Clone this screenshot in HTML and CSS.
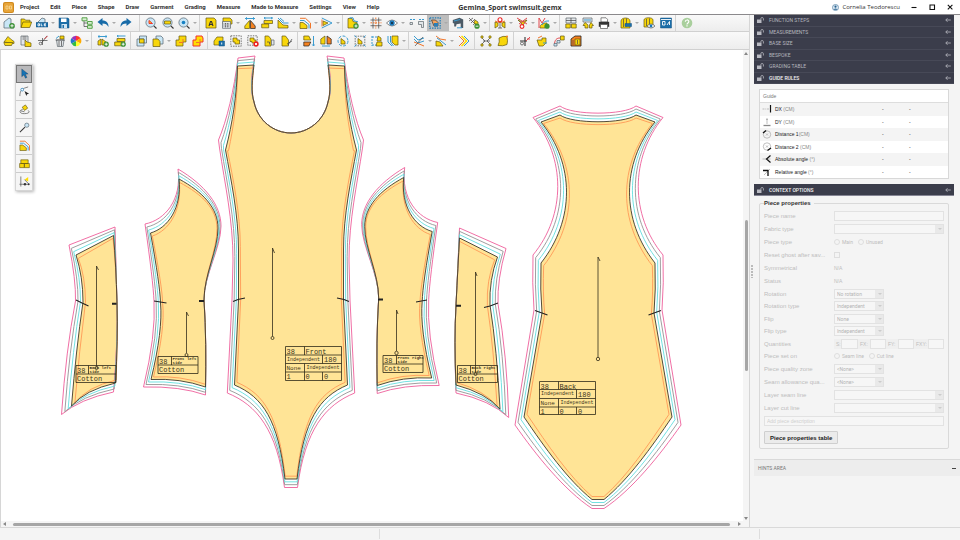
FILE: index.html
```html
<!DOCTYPE html>
<html lang="en">
<head>
<meta charset="utf-8">
<title>Gemina_Sport swimsuit.gemx</title>
<link rel="stylesheet" href="styles.css">
</head>
<body>
<svg class="sprite" aria-hidden="true">
  <symbol id="new" viewBox="0 0 12 12"><path class="b" d="M1 5l5-4 2 1v5l3 2v2H1z"/><circle class="g" cx="9" cy="8.8" r="2.8"/><path class="wl" d="M7.4 8.8h3.2M9 7.2v3.2"/></symbol>
  <symbol id="open" viewBox="0 0 12 12"><path class="y" d="M1 10.5V2h3.5l1 1.2H10v2M1 10.500 3 5h8.700l-2 5.500z"/></symbol>
  <symbol id="ole" viewBox="0 0 12 12"><path class="b" d="M2 5l4-4 3 1v4H2z"/><path class="bd" d="M0 5.500h12v4.500h-12z"/><path class="wl" d="M2 6.800h1.500v2H2zM5.200 6.500v2.300h1.300M10 6.800H8.300v2H10M8.300 7.800h1.500"/></symbol>
  <symbol id="save" viewBox="0 0 12 12"><path class="bd" d="M1 1h9l1 1v9H1z"/><path fill="#fff" d="M3 1.500h5.500V5H3z"/><path fill="#cfe4f2" d="M3.500 7h5.500v4H3.500z"/><path fill="#1b6ea8" d="M4.500 8h1.500v3H4.500z"/></symbol>
  <symbol id="tree" viewBox="0 0 12 12"><path class="k" d="M3 4v5.500h4M3 6h4"/><path class="gr" d="M1 .8h5v3H1zM6.500 4.500h4.700v2.800H6.500z"/><path class="gr" d="M6.500 8.600h4.700v2.700H6.500z"/></symbol>
  <symbol id="undo" viewBox="0 0 12 12"><path fill="#176ba8" d="M.5 5 5.500 1v2.500c4 0 6 2.500 6 6.500-1.300-2.500-3-3.500-6-3.500V9z"/></symbol>
  <symbol id="redo" viewBox="0 0 12 12"><path fill="#176ba8" d="M11.500 5 6.500 1v2.500c-4 0-6 2.500-6 6.500 1.300-2.500 3-3.500 6-3.500V9z"/></symbol>
  <symbol id="zoom1" viewBox="0 0 12 12"><circle class="b" cx="5.500" cy="5.500" r="4.600"/><path class="k2" d="M8.800 8.800 11.500 11.500"/><path fill="#fd0" stroke="#e33" d="M4 3.500l3.500 3H4z"/></symbol>
  <symbol id="zoom2" viewBox="0 0 12 12"><circle class="b" cx="5.500" cy="5.500" r="4.600"/><path class="k2" d="M8.800 8.800 11.500 11.500"/><path class="y" d="M2.500 4h6v3h-6z"/></symbol>
  <symbol id="zoom3" viewBox="0 0 12 12"><circle class="b" cx="5.500" cy="5.500" r="4.600"/><path class="k2" d="M8.800 8.800 11.500 11.500"/><circle cx="5.500" cy="5.500" r="1.800" fill="#1580c4"/></symbol>
  <symbol id="label-a" viewBox="0 0 12 12"><path class="y" d="M1 1h8l2 2v8H1z"/><path class="k2" d="M4 9l1.500-4.500h1L8 9M4.500 7.500h3"/></symbol>
  <symbol id="calc" viewBox="0 0 12 12"><path class="y" d="M2 1h7l2 2v4H2z"/><path class="gr2" d="M1.500 4.500h8v6.800h-8z"/><path class="k" d="M2.500 7h6M2.500 9h6M4.500 6v5M6.700 6v5" stroke-dasharray="1 .6"/></symbol>
  <symbol id="mirror" viewBox="0 0 12 12"><path class="bl" d="M1 1.500h10M3 .3 1.500 1.500 3 2.700M9 .3l1.500 1.200L9 2.700"/><path class="y" d="M5.500 3.500v8H.8V9z"/><path fill="#f58220" stroke="#222" stroke-width=".7" d="M6.500 3.500v8h4.700V9z"/></symbol>
  <symbol id="stretch" viewBox="0 0 12 12"><path class="bl" d="M3 1h8.500M4.500 0 3 1l1.500 1M10 0l1.500 1L10 2"/><path class="y" d="M3 3.500h8.500v3H3zM.7 7h7v3.800h-7z"/></symbol>
  <symbol id="corner" viewBox="0 0 12 12"><path class="y" d="M1 3v8h10V8.500L6 8z"/><path class="bl" d="M1 1l5 5h5.500M3 1l4 3.500"/></symbol>
  <symbol id="nest" viewBox="0 0 12 12"><path class="y" d="M1 5.500h3l4 3v3H1z"/><path class="bl" d="M1 3.500h4l5 4v4"/><path class="ol" d="M1 1.300h5.500l5 4.700v5.500"/></symbol>
  <symbol id="tri" viewBox="0 0 12 12"><path class="bl" d="M.8 1 11 6 .8 11"/><path class="y" d="M2 4l5 2-5 2.500z"/><path class="ol" d="M1 2.500v7"/></symbol>
  <symbol id="add-piece" viewBox="0 0 12 12"><path class="y" d="M1 1.500h4l1 3 4 1v5.500H1z"/><path class="bl" d="M2.500 .8h3.500l1 3 4 1"/><circle class="g" cx="9" cy="9" r="2.700"/><path class="wl" d="M7.500 9h3M9 7.500v3"/></symbol>
  <symbol id="grid" viewBox="0 0 12 12"><path class="k" d="M3 .5v11M8.700 .5v11M.5 3h11M.5 8.700h11"/><path class="ol" d="M5.800 .5v11M.5 5.800h11" stroke-dasharray="1.500 1"/></symbol>
  <symbol id="eye" viewBox="0 0 12 12"><path class="w" d="M.5 6Q6 0 11.500 6 6 12 .5 6z"/><circle cx="6" cy="6" r="2.700" fill="#1b78b8"/><circle cx="6" cy="6" r="1" fill="#123"/></symbol>
  <symbol id="pair" viewBox="0 0 16 12"><path class="bl" d="M1 2.500h5M10 2.500h5" stroke-dasharray="2 1"/><path class="gr2" d="M1 5.500h2.500v2H1zM9.500 4.500h5v6h-2V7.500h-3z"/></symbol>
  <symbol id="ghost" viewBox="0 0 12 12"><path d="M.8 .8h10.400v10.400H.8z" fill="none" stroke="#247db5" stroke-width="1.200" stroke-dasharray="1.500 1"/><path fill="#f7a35c" stroke="#333" stroke-width=".7" d="M2.500 3h4l2.500 2.500V9H5z"/><path fill="#2b7fb9" d="M5 6h4v3.500H5z"/></symbol>
  <symbol id="machine" viewBox="0 0 12 12"><path fill="#4b5a66" d="M.8 3 7.500 .8l3.700 1.700v8.500H8.700V6.500l-4.200.8L4 9.500H2.200V6.500L.8 6z"/><path class="bl" d="M2 4l6-1.500M5 10.800h5"/></symbol>
  <symbol id="needle" viewBox="0 0 12 12"><path class="k" d="M1 1l8 8M1 4l4-3M3 6l4-4M5 8l3.500-3"/><path class="y" d="M7 3l3 2v3l-4-2z"/><circle class="g" cx="9" cy="9.200" r="2.600"/><path class="wl" d="M7.600 9.200h2.800"/></symbol>
  <symbol id="pin-r" viewBox="0 0 12 12"><path class="y" d="M1 5l3 1v3l-3 2zM11 5 8 6v3l3 2z"/><circle cx="6" cy="2.700" r="2" class="rr"/><path class="ol" d="M1 4l4 1.500h2L11 4"/><path class="k" d="M6 5v6M4 11h4"/></symbol>
  <symbol id="cross-r" viewBox="0 0 12 12"><path class="y" d="M2 3l4 2 5-2-4 5z"/><path class="rl" d="M1 1l10 6M11 1 3 7"/><circle cx="6" cy="9.500" r="1.900" class="rr"/></symbol>
  <symbol id="fan" viewBox="0 0 12 12"><path class="y" d="M2 11c0-4 3-5 7-5l-2 5z"/><path class="rl" d="M1 11V1l3 5 3-5"/><path class="bl" d="M4 8c2-4 4-4 7-4"/><circle class="g" cx="9" cy="9.200" r="2.600"/></symbol>
  <symbol id="layout" viewBox="0 0 12 12"><path class="gr2" d="M1 1h10v5H1z"/><path class="k" d="M1 3.500h10M6 1v5"/><path class="y" d="M.8 7h4.500v4H.8zM6.500 7h4.700v4H6.500z"/></symbol>
  <symbol id="layout2" viewBox="0 0 12 12"><path class="gr2" d="M1 1h9v4H1z"/><path class="bl" d="M2 3h7"/><path class="y" d="M3 5.500 6 8v3H3V8.500H1zM9 5.500l2.500 3H10V11H7.500V8z"/></symbol>
  <symbol id="print" viewBox="0 0 12 12"><path class="w" d="M3 .8h5l1.500 1.500V5H3z"/><path fill="#333" d="M.8 4.800h10.400v5H.8z"/><path class="w" d="M2.500 7.500h7v4h-7z"/></symbol>
  <symbol id="roll" viewBox="0 0 12 12"><path class="y" d="M1 4c0-4 9-4 9 0v7H1z"/><path class="k" d="M3.500 2v8M6.500 1.500v8"/><path class="bd" d="M5 6.500h6.500v3H5z"/></symbol>
  <symbol id="roll-eye" viewBox="0 0 12 12"><path class="y" d="M1 3c0-3 9-3 9 0v7H1z"/><path class="k" d="M3.500 2v7M6.500 1.500v7"/><path class="w" d="M4 9q4-4 8 0-4 4-8 0z"/><circle cx="8" cy="9" r="1.400" fill="#1b78b8"/></symbol>
  <symbol id="screen" viewBox="0 0 12 12"><path class="bd" d="M.5 1h11v10H.5z"/><path class="wl" d="M2.500 4.500h2.500v3.500H2.500zM7 8l2.500-3.500V8M1 2.500h10"/></symbol>
  <symbol id="help" viewBox="0 0 12 12"><circle cx="6" cy="6" r="5.300" fill="#a9cf9d"/><path d="M4.300 4.800c0-2.400 3.500-2.400 3.500-.2 0 1.400-1.800 1.300-1.800 2.900M6 8.300v1.300" fill="none" stroke="#fff" stroke-width="1.200"/></symbol>

  <symbol id="p-rot" viewBox="0 0 12 12"><path class="y" d="M1 7l4-5.500 2.500 2.500 3.500 2.500v2z"/><path class="y" d="M.8 7.500h9L8.500 10.500H2z"/></symbol>
  <symbol id="paste" viewBox="0 0 12 12"><path class="gr2" d="M1 1h7v9H1z"/><path class="k" d="M2.500 2h4M2.500 4h4"/><path class="y" d="M5 5l2 2 4 1v3.500H5z"/></symbol>
  <symbol id="cut" viewBox="0 0 12 12"><path class="k" d="M10 .8 4.500 8M1 5.500h9.500M5.500 3v7"/><circle class="k" cx="3.500" cy="8.500" r="1.300"/><path class="rl" d="M7.500 4l3-3"/></symbol>
  <symbol id="trash" viewBox="0 0 12 12"><path class="y" d="M6 1h4v3H6z"/><path class="gr2" d="M2.500 5h7.500l-1 6.500H3.500z"/><path class="k" d="M1.500 5h9.500M5 6v5M7.500 6v5"/><path class="bl" d="M2 3.500l3-2.500"/></symbol>
  <symbol id="wheel" viewBox="0 0 12 12"><path fill="#f33" d="M6 6V.7a5.300 5.300 0 0 1 4.600 2.600z"/><path fill="#fa0" d="M6 6l4.600-2.700a5.300 5.300 0 0 1 0 5.300z"/><path fill="#ff3" d="M6 6l4.600 2.600A5.300 5.300 0 0 1 6 11.300z"/><path fill="#3b4" d="M6 6v5.300a5.300 5.300 0 0 1-4.600-2.700z"/><path fill="#27c" d="M6 6 1.400 8.600a5.300 5.300 0 0 1 0-5.300z"/><path fill="#93b" d="M6 6 1.400 3.300A5.300 5.300 0 0 1 6 .7z"/></symbol>
  <symbol id="w-add" viewBox="0 0 12 12"><path class="bl" d="M1 1.500h9M2.500 .3 1 1.500l1.500 1.200M8.500 .3 10 1.500 8.500 2.700"/><path class="y" d="M1 10V6l3-2v6zM5 10V4l4 3v3z"/><circle class="g" cx="9.200" cy="9.200" r="2.600"/><path class="wl" d="M7.700 9.200h3M9.200 7.700v3"/></symbol>
  <symbol id="s-add" viewBox="0 0 12 12"><path class="bl" d="M3 1h8.500M4.500 0 3 1l1.500 1"/><path class="y" d="M3 3.500h8v3H3zM.7 7h7v3.800h-7z"/><circle class="g" cx="9.200" cy="9.200" r="2.600"/><path class="wl" d="M7.700 9.200h3M9.200 7.700v3"/></symbol>
  <symbol id="copy1" viewBox="0 0 12 12"><path class="b" d="M3.500 1h7v7h-7z"/><path class="b" d="M1 4h7v7H1z"/><path class="y" d="M3.500 4H8v4H3.500z"/></symbol>
  <symbol id="copy2" viewBox="0 0 12 12"><path class="b" d="M4 1h5l2 2v6H4z"/><path class="y" d="M1 4h5l2 2.500v5H1z"/></symbol>
  <symbol id="merge" viewBox="0 0 12 12"><path class="y" d="M4 1h7v6H8v4H1V5h3z"/><path class="ol" d="M4 7.500h4V4"/></symbol>
  <symbol id="merge-r" viewBox="0 0 12 12"><path fill="#fd0" stroke="#e33" d="M4 1h6l1 2v4H8v4H1V5h3z"/><path class="ol" d="M4 7.500h4V4"/></symbol>
  <symbol id="lock" viewBox="0 0 12 12"><path class="y" d="M1 6l3-4h6v3L8 10H1z"/><path class="bd" d="M6 6h5.500v5H6z"/><path class="wl" d="M8.700 7.500v2"/></symbol>
  <symbol id="sel" viewBox="0 0 12 12"><path d="M.8 .8h10.400v10.400H.8z" class="dash"/><path class="y" d="M3 3h4v2h2.500v4H5V7H3z"/></symbol>
  <symbol id="sel-x" viewBox="0 0 12 12"><path d="M.8 .8h9.400v9.400H.8z" class="dash"/><path class="y" d="M3 3h4v2h2v3H5V6.500H3z"/><circle cx="9" cy="9" r="2.700" fill="#e22"/><path class="wl" d="M8 8l2 2M10 8l-2 2"/></symbol>
  <symbol id="turn1" viewBox="0 0 12 12"><path class="y" d="M1 1h3.500L7 4v7H1z"/><path class="gr2" d="M7.500 5H10v5H7.500z"/><path class="k" d="M3 7h2.500v2.500"/></symbol>
  <symbol id="turn2" viewBox="0 0 12 12"><path class="y" d="M1 1h3.500L7.500 5v6H1z"/><path class="k" d="M11 4l-4 6M6 9l5-3"/></symbol>
  <symbol id="updown" viewBox="0 0 12 12"><path class="y" d="M.8 1h5l2 4h-7z"/><path fill="#f58220" stroke="#222" stroke-width=".7" d="M.8 7h7l-2 4h-5z"/><path class="bl" d="M10.500 1v10M9.300 9.500l1.200 1.500 1.200-1.500"/></symbol>
  <symbol id="flip-h" viewBox="0 0 12 12"><path class="y" d="M5 1v8H.8V4z"/><path fill="#f58220" stroke="#222" stroke-width=".7" d="M7 1v8h4.200V4z"/><path class="bl" d="M2 11h8"/></symbol>
  <symbol id="rot" viewBox="0 0 12 12"><circle cx="6" cy="6" r="5" class="bl" stroke-dasharray="3 1.500"/><path class="y" d="M4 3.500l4 3V9H4z"/></symbol>
  <symbol id="scale" viewBox="0 0 12 12"><path d="M1.200 1.200h9.600v9.600H1.200z" class="dash"/><path class="y" d="M4 3.500l4 3V9H4z"/><path class="bl" d="M.5 .5l2 2M11.500 .5l-2 2M.5 11.500l2-2M11.500 11.500l-2-2"/></symbol>
  <symbol id="align" viewBox="0 0 12 12"><path class="bl" d="M1 1v10M1 2h5M1 10h5" stroke-dasharray="2 1"/><path class="y" d="M7 1l3 2v3H6zM6 7h5v4H5z"/></symbol>
  <symbol id="unfold" viewBox="0 0 12 12"><path class="y" d="M5 1h6v9H8L5 7z"/><path class="bl" d="M3.500 1v6l3 4M1 1v6l4 4"/></symbol>
  <symbol id="g1" viewBox="0 0 12 12"><path class="bl" d="M1 1l4 4 6-2M1 4l4 4 6-2"/><path class="ol" d="M1 7l4 1.500L11 11"/><path class="k" d="M2 11l8-9"/></symbol>
  <symbol id="g2" viewBox="0 0 12 12"><path class="y" d="M1 6l4 1 3 4H1z"/><path class="ol" d="M1 1l4 3 6 1"/><path class="bl" d="M2 3l4 3 5 4"/></symbol>
  <symbol id="g3" viewBox="0 0 12 12"><path class="ol" d="M1 1l5 5-5 5"/><path d="M3.500 1l5 5-5 5" fill="none" stroke="#fd0" stroke-width="1.500"/><path class="bl" d="M6 1l5 5-5 5"/></symbol>
  <symbol id="spread" viewBox="0 0 12 12"><path class="k" d="M1 2l4 4-4 4M11 2 7 6l4 4M3 6h7"/><circle class="y" cx="2" cy="2" r="1.200"/><circle class="y" cx="10" cy="2" r="1.200"/><circle class="y" cx="2" cy="10" r="1.200"/><circle class="y" cx="10" cy="10" r="1.200"/></symbol>
  <symbol id="bulge" viewBox="0 0 12 12"><path class="y" d="M2 3q4-2.500 8-1.500Q11 6 10 9.500q-4 2-9 1Q3 7 2 3z"/><circle cx="10" cy="1.500" r="1" fill="#f58220"/></symbol>
  <symbol id="snip" viewBox="0 0 12 12"><path class="k2" d="M1 6h7M6 2v9"/><path class="rl" d="M7 6l4-4M8 4h3"/><circle class="k" cx="3" cy="8.500" r="1.500"/></symbol>
  <symbol id="swap" viewBox="0 0 12 12"><path class="y" d="M1 5h5V3h4v5L7 11H3z"/><path class="ol" d="M2 3l4-2"/><path class="bl" d="M7 8h4"/></symbol>
  <symbol id="link" viewBox="0 0 12 12"><path class="rl" d="M1.500 10c0-5 2-7 5.500-7"/><path class="y" d="M7.500 1h3.700v4H7.500z"/><path class="b" d="M4 5.500h3v2.500H4zM1 8.500h3v2.500H1z"/></symbol>
  <symbol id="book" viewBox="0 0 12 12"><path fill="#f58220" stroke="#222" stroke-width=".8" d="M1 4l4-3h6v10H1z"/><path class="y" d="M5 4h5v6H5z"/><path class="k" d="M3 5v5M7.500 5v4"/></symbol>

  <symbol id="arrow" viewBox="0 0 12 12"><path fill="#1673b5" stroke="#123" stroke-width=".3" d="M3 1l7 5.500-3 .3 1.700 3.500-1.700.8-1.600-3.600L3 9.500z"/></symbol>
  <symbol id="node" viewBox="0 0 12 12"><path class="k" d="M1 11V9q0-6 9-8"/><circle cx="3.500" cy="4" r="1.500" fill="#fff" stroke="#1b78b8" stroke-width=".8"/><path fill="#222" d="M6 5.500l5 3-2.300.5-.7 2z"/></symbol>
  <symbol id="sew" viewBox="0 0 12 12"><path class="y" d="M3.500 3.500 7 1l2.500 3.500L6 7z"/><path class="k" d="M4 6c-5 1-3 5 2 4.500 5 0 6-2 4-3.500M2 7.500l4 1"/></symbol>
  <symbol id="probe" viewBox="0 0 12 12"><path class="k2" d="M1 11l5.500-5.500"/><circle class="b" cx="8.500" cy="3.500" r="2.300"/></symbol>
  <symbol id="boxes" viewBox="0 0 12 12"><path class="y" d="M2 2h8v4H2zM.7 6h5v4.500h-5zM6 6h5.300v4.500H6z"/></symbol>
  <symbol id="notch" viewBox="0 0 12 12"><path fill="#fd0" d="M6 4l4-3v5z"/><path class="k" d="M2 .5v11M.5 9h11M6 4l4 4"/><circle cx="6.500" cy="9" r="1.300" fill="#333"/><circle cx="10.500" cy="9" r="1" fill="#333"/></symbol>

  <symbol id="unlock" viewBox="0 0 8 6"><path fill="#b9bac2" d="M0 2.500h4.500V6H0z"/><path d="M3.800 2.500V1.800a1.300 1.300 0 0 1 2.600 0V3.500" fill="none" stroke="#b9bac2" stroke-width=".8"/></symbol>
  <symbol id="back" viewBox="0 0 6 6"><path d="M.8 3h5M2.500 1.200.8 3l1.700 1.800" fill="none" stroke="#b9bac2" stroke-width=".8"/></symbol>
  <symbol id="r-dx" viewBox="0 0 10 10"><path class="q" d="M.5 5h2M3.300 5h1M5 5h2"/><path d="M8.500 1v7.500" stroke="#111" stroke-width="1.200"/></symbol>
  <symbol id="r-dy" viewBox="0 0 10 10"><path class="q" d="M5 1v6M4 2.500h2"/><path d="M1.500 8.500h7" stroke="#888" stroke-width="1.300"/></symbol>
  <symbol id="r-d1" viewBox="0 0 10 10"><circle class="q" cx="5" cy="5.500" r="3.700"/><path class="q" d="M4 4.500l2 2M6 4.500l-2 2"/><path d="M1 4l3-2.500" stroke="#111" stroke-width="1.300"/></symbol>
  <symbol id="r-d2" viewBox="0 0 10 10"><circle class="q" cx="5" cy="4.500" r="3.700"/><path class="q" d="M4 3.500l2 2M6 3.500l-2 2"/><path d="M5.500 8.500 9 6" stroke="#111" stroke-width="1.300"/></symbol>
  <symbol id="r-ab" viewBox="0 0 10 10"><path class="q" d="M.5 5h8"/><path d="M8.500 1.500 4.500 5l4 3.500" fill="none" stroke="#111" stroke-width="1.200"/></symbol>
  <symbol id="r-re" viewBox="0 0 10 10"><path class="q" d="M2 8l6-6"/><path d="M1 3.500h5V9" fill="none" stroke="#111" stroke-width="1.300"/></symbol>
</svg>

<div class="app">
  <header class="titlebar">
    <svg class="logo" viewBox="0 0 11 11" aria-hidden="true"><rect width="11" height="11" rx="2" fill="#d08a1e"/><rect x="1" y="1" width="9" height="9" rx="1.500" fill="#e8a53a"/><path d="M3 4h2v3H3zM6.500 4h2v3h-2z" fill="none" stroke="#f6d894" stroke-width=".8"/></svg>
    <nav class="menu">
      <a href="#">Project</a><a href="#">Edit</a><a href="#">Piece</a><a href="#">Shape</a><a href="#">Draw</a><a href="#">Garment</a><a href="#">Grading</a><a href="#">Measure</a><a href="#">Made to Measure</a><a href="#">Settings</a><a href="#">View</a><a href="#">Help</a>
    </nav>
    <h1>Gemina_Sport swimsuit.gemx</h1>
    <div class="user"><svg viewBox="0 0 8 8" aria-hidden="true"><circle cx="4" cy="4" r="3.500" fill="#dbe9f3" stroke="#45779d" stroke-width=".7"/><circle cx="4" cy="3" r="1.200" fill="#27618f"/><path d="M1.800 6.500q2.200-3 4.400 0z" fill="#27618f"/></svg>Cornelia Teodorescu</div>
    <div class="win">
      <button aria-label="Minimize"><svg viewBox="0 0 8 8"><path d="M1.500 4.500h5"/></svg></button>
      <button aria-label="Maximize"><svg viewBox="0 0 8 8"><path d="M2 2h4.500v4.500H2z"/></svg></button>
      <button aria-label="Close"><svg viewBox="0 0 8 8"><path d="M1.800 1.800l4.600 4.600M6.400 1.800 1.800 6.400"/></svg></button>
    </div>
  </header>

  <div class="work">
    <main class="left">
      <div class="toolbar">
        <div class="group roomy">
          <button aria-label="New"><svg><use href="#new"/></svg></button>
          <button aria-label="Open"><svg><use href="#open"/></svg></button>
          <button class="drop" aria-label="OLE"><svg><use href="#ole"/></svg></button>
          <button class="drop" aria-label="Save"><svg><use href="#save"/></svg></button>
          <button aria-label="Structure"><svg><use href="#tree"/></svg></button>
          <button class="drop" aria-label="Undo"><svg><use href="#undo"/></svg></button>
          <button aria-label="Redo"><svg><use href="#redo"/></svg></button>
        </div>
        <div class="group">
          <button aria-label="Zoom piece"><svg><use href="#zoom1"/></svg></button>
          <button aria-label="Zoom all"><svg><use href="#zoom2"/></svg></button>
          <button class="drop" aria-label="Zoom point"><svg><use href="#zoom3"/></svg></button>
        </div>
        <div class="group">
          <button aria-label="Piece label"><svg><use href="#label-a"/></svg></button>
          <button class="drop" aria-label="Calculator"><svg><use href="#calc"/></svg></button>
          <button aria-label="Compare"><svg><use href="#mirror"/></svg></button>
          <button aria-label="Stretch"><svg><use href="#stretch"/></svg></button>
          <button class="drop" aria-label="Seam corner"><svg><use href="#corner"/></svg></button>
          <button class="drop" aria-label="Nest"><svg><use href="#nest"/></svg></button>
          <button class="drop" aria-label="Dart"><svg><use href="#tri"/></svg></button>
        </div>
        <div class="group">
          <button class="drop" aria-label="Add piece"><svg><use href="#add-piece"/></svg></button>
          <button aria-label="Grid"><svg><use href="#grid"/></svg></button>
          <button class="drop" aria-label="View"><svg><use href="#eye"/></svg></button>
          <button class="pair" aria-label="Pairs"><svg><use href="#pair"/></svg></button>
          <button class="drop pressed" aria-label="Ghost"><svg><use href="#ghost"/></svg></button>
          <button aria-label="Sewing"><svg><use href="#machine"/></svg></button>
          <button class="drop" aria-label="Stitch"><svg><use href="#needle"/></svg></button>
        </div>
        <div class="group">
          <button class="drop" aria-label="Pin"><svg><use href="#pin-r"/></svg></button>
          <button class="drop" aria-label="Intersect"><svg><use href="#cross-r"/></svg></button>
          <button class="drop" aria-label="Fan"><svg><use href="#fan"/></svg></button>
        </div>
        <div class="group">
          <button aria-label="Marker"><svg><use href="#layout"/></svg></button>
          <button aria-label="Marker order"><svg><use href="#layout2"/></svg></button>
          <button class="drop" aria-label="Print"><svg><use href="#print"/></svg></button>
          <button class="drop" aria-label="Plot"><svg><use href="#roll"/></svg></button>
          <button aria-label="Preview plot"><svg><use href="#roll-eye"/></svg></button>
          <button aria-label="Screen"><svg><use href="#screen"/></svg></button>
        </div>
        <div class="group">
          <button aria-label="Help"><svg><use href="#help"/></svg></button>
        </div>
      </div>
      <div class="toolbar">
        <div class="group">
          <button aria-label="Rotate piece"><svg><use href="#p-rot"/></svg></button>
          <button aria-label="Paste"><svg><use href="#paste"/></svg></button>
          <button aria-label="Cut"><svg><use href="#cut"/></svg></button>
          <button aria-label="Delete"><svg><use href="#trash"/></svg></button>
          <button class="drop" aria-label="Colours"><svg><use href="#wheel"/></svg></button>
        </div>
        <div class="group mid">
          <button aria-label="Add width"><svg><use href="#w-add"/></svg></button>
          <button aria-label="Add stretch"><svg><use href="#s-add"/></svg></button>
        </div>
        <div class="group">
          <button aria-label="Duplicate"><svg><use href="#copy1"/></svg></button>
          <button class="drop" aria-label="Duplicate shape"><svg><use href="#copy2"/></svg></button>
          <button aria-label="Merge"><svg><use href="#merge"/></svg></button>
          <button aria-label="Merge red"><svg><use href="#merge-r"/></svg></button>
        </div>
        <div class="group mid">
          <button aria-label="Lock"><svg><use href="#lock"/></svg></button>
          <button aria-label="Select"><svg><use href="#sel"/></svg></button>
          <button aria-label="Deselect"><svg><use href="#sel-x"/></svg></button>
          <button aria-label="Turn"><svg><use href="#turn1"/></svg></button>
          <button aria-label="Turn free"><svg><use href="#turn2"/></svg></button>
        </div>
        <div class="group">
          <button aria-label="Flip vertical"><svg><use href="#updown"/></svg></button>
          <button aria-label="Flip horizontal"><svg><use href="#flip-h"/></svg></button>
          <button aria-label="Rotate"><svg><use href="#rot"/></svg></button>
          <button aria-label="Scale"><svg><use href="#scale"/></svg></button>
          <button aria-label="Align"><svg><use href="#align"/></svg></button>
          <button class="drop" aria-label="Unfold"><svg><use href="#unfold"/></svg></button>
        </div>
        <div class="group mid">
          <button class="drop" aria-label="Grade cross"><svg><use href="#g1"/></svg></button>
          <button class="drop" aria-label="Grade line"><svg><use href="#g2"/></svg></button>
          <button aria-label="Grade copy"><svg><use href="#g3"/></svg></button>
        </div>
        <div class="group mid">
          <button aria-label="Spread"><svg><use href="#spread"/></svg></button>
          <button aria-label="Shape"><svg><use href="#bulge"/></svg></button>
        </div>
        <div class="group">
          <button aria-label="Snip"><svg><use href="#snip"/></svg></button>
          <button aria-label="Swap"><svg><use href="#swap"/></svg></button>
          <button aria-label="Link"><svg><use href="#link"/></svg></button>
          <button aria-label="Library"><svg><use href="#book"/></svg></button>
        </div>
      </div>

      <div class="stage">
        <div class="canvas">
          <svg class="drawing" viewBox="1 50 742 471" role="img" aria-label="Swimsuit pieces">
            <g id="pieces"></g>
            <g class="grain">
              <path d="M272.500 248v88.500M272.500 248l2 5"/><circle cx="272.500" cy="338" r="1.500"/>
              <path d="M598 257v100.500M598 257l2 4"/><circle cx="598" cy="359" r="1.700"/>
              <path d="M96.500 266v100.500M96.500 266l2 4"/><circle cx="96.500" cy="368" r="1.500"/>
              <path d="M186.500 312v41M186.500 312l2 4"/><circle cx="186.500" cy="355" r="1.500"/>
              <path d="M396.500 310v41M396.500 310l1.500 4"/><circle cx="396.500" cy="353" r="1.700"/>
              <path d="M475.500 272v100.500M475.500 272l1.500 4"/><circle cx="475.500" cy="374" r="1.500"/>
            </g>
            <g class="notches">
              <path d="M233 301.500l5-2 7-1.500M349 301.500l-5-2-7-1.500M535 310.500l12.500 4.500M661 310.500 648.500 315M76 300l6 3 6.500 3M154 301l12.500 2M416 302l11-2M484 307.500l6-1.500 8-3"/>
              <path class="blob" d="M112 303.800h4.500M199 301h5M378 299.500h5M456 305.800h5"/>
            </g>
            <g class="plate" transform="translate(76 365.500)"><path d="M0 0h40v17H0zM0 8.500h40M12.500 0v8.500"/><text class="t7" x="1" y="7">38</text><text class="t4" x="13.500" y="3.500">Back left</text><text class="t4" x="13.500" y="7.500">side</text><text class="t7" x="1" y="15">Cotton</text></g>
            <g class="plate" transform="translate(158 356.500)"><path d="M0 0h40v17H0zM0 8.500h40M13.500 0v8.500"/><text class="t7" x="1" y="7">38</text><text class="t4" x="14.500" y="3.500">Front left</text><text class="t4" x="14.500" y="7.500">side</text><text class="t7" x="1" y="15">Cotton</text></g>
            <g class="plate" transform="translate(383 355.500)"><path d="M0 0h40v17H0zM0 8.500h40M13.500 0v8.500"/><text class="t7" x="1" y="7">38</text><text class="t4" x="14.500" y="3.500">Front right</text><text class="t4" x="14.500" y="7.500">side</text><text class="t7" x="1" y="15">Cotton</text></g>
            <g class="plate" transform="translate(457.500 365.500)"><path d="M0 0h40v17H0zM0 8.500h40M13 0v8.500"/><text class="t7" x="1" y="7">38</text><text class="t4" x="14" y="3.500">Back right</text><text class="t4" x="14" y="7.500">side</text><text class="t7" x="1" y="15">Cotton</text></g>
            <g class="plate" transform="translate(285.500 346.500)"><path d="M0 0h56v34H0zM0 8.500h56M0 17h56M0 25.500h56M19 0v8.500M37 8.500v8.500M19 17v17M37 25.500v8.500"/><text class="t7" x="1" y="7">38</text><text class="t7" x="20" y="7">Front</text><text class="t5" x="1.500" y="14">Independent</text><text class="t7" x="38.500" y="15.500">180</text><text class="t6" x="1" y="23.500">None</text><text class="t5" x="21" y="22.500">Independent</text><text class="t7" x="1" y="32.500">1</text><text class="t7" x="20" y="32.500">0</text><text class="t7" x="38.500" y="32.500">0</text></g>
            <g class="plate" transform="translate(539.500 381.500)"><path d="M0 0h56v33H0zM0 8h56M0 17h56M0 25.500h56M19 0v8M37 8v9M19 17v16M37 25.500v7.500"/><text class="t7" x="1" y="7">38</text><text class="t7" x="20" y="7">Back</text><text class="t5" x="1.500" y="13.500">Independent</text><text class="t7" x="38.500" y="15">180</text><text class="t6" x="1" y="23">None</text><text class="t5" x="21" y="22">Independent</text><text class="t7" x="1" y="32">1</text><text class="t7" x="20" y="32">0</text><text class="t7" x="38.500" y="32">0</text></g>
          </svg>
          <div class="palette">
            <button class="on" aria-label="Select"><svg><use href="#arrow"/></svg></button>
            <button aria-label="Edit points"><svg><use href="#node"/></svg></button>
            <button aria-label="Sew"><svg><use href="#sew"/></svg></button>
            <button aria-label="Probe"><svg><use href="#probe"/></svg></button>
            <button aria-label="Nest"><svg><use href="#nest"/></svg></button>
            <button aria-label="Group"><svg><use href="#boxes"/></svg></button>
            <button aria-label="Notch"><svg><use href="#notch"/></svg></button>
          </div>
        </div>
        <div class="vbar"><i class="up"></i><span class="vtrack"><b></b></span><i class="down"></i></div>
        <div class="hbar"><i class="prev"></i><b></b><i class="next"></i></div>
      </div>
    </main>

    <aside class="side">
      <div class="grip"></div>
      <div class="panels">
        <div class="accordion">
          <button><svg class="lk"><use href="#unlock"/></svg><span>FUNCTION STEPS</span><svg class="ar"><use href="#back"/></svg></button>
          <button><svg class="lk"><use href="#unlock"/></svg><span>MEASUREMENTS</span><svg class="ar"><use href="#back"/></svg></button>
          <button><svg class="lk"><use href="#unlock"/></svg><span>BASE SIZE</span><svg class="ar"><use href="#back"/></svg></button>
          <button><svg class="lk"><use href="#unlock"/></svg><span>BESPOKE</span><svg class="ar"><use href="#back"/></svg></button>
          <button><svg class="lk"><use href="#unlock"/></svg><span>GRADING TABLE</span><svg class="ar"><use href="#back"/></svg></button>
          <button class="active"><svg class="lk"><use href="#unlock"/></svg><span>GUIDE RULES</span><svg class="ar"><use href="#back"/></svg></button>
        </div>
        <table class="guide">
          <thead><tr><th colspan="4">Guide</th></tr></thead>
          <tbody>
            <tr><td class="ic"><svg><use href="#r-dx"/></svg></td><td>DX <small>(CM)</small></td><td class="v">-</td><td class="v">-</td></tr>
            <tr><td class="ic"><svg><use href="#r-dy"/></svg></td><td>DY <small>(CM)</small></td><td class="v">-</td><td class="v">-</td></tr>
            <tr><td class="ic"><svg><use href="#r-d1"/></svg></td><td>Distance 1<small>(CM)</small></td><td class="v">-</td><td class="v">-</td></tr>
            <tr><td class="ic"><svg><use href="#r-d2"/></svg></td><td>Distance 2 <small>(CM)</small></td><td class="v">-</td><td class="v">-</td></tr>
            <tr><td class="ic"><svg><use href="#r-ab"/></svg></td><td>Absolute angle <small>(°)</small></td><td class="v">-</td><td class="v">-</td></tr>
            <tr><td class="ic"><svg><use href="#r-re"/></svg></td><td>Relative angle <small>(°)</small></td><td class="v">-</td><td class="v">-</td></tr>
          </tbody>
        </table>
        <div class="accordion single">
          <button class="active"><svg class="lk"><use href="#unlock"/></svg><span>CONTEXT OPTIONS</span><svg class="ar"><use href="#back"/></svg></button>
        </div>
        <fieldset class="props">
          <legend>Piece properties</legend>
          <div class="form">
            <label for="pname">Piece name</label><input id="pname" type="text" disabled>
            <label for="fabric">Fabric type</label><span class="sel"><select id="fabric" disabled><option></option></select></span>
            <span>Piece type</span><span class="radios"><label><input type="radio" name="ptype" disabled>Main</label><label><input type="radio" name="ptype" disabled>Unused</label></span>
            <label for="ghosts">Reset ghost after sav...</label><input id="ghosts" type="checkbox" disabled>
            <span>Symmetrical</span><span class="na">N/A</span>
            <span>Status</span><span class="na">N/A</span>
            <label for="rota">Rotation</label><span class="sel short"><select id="rota" disabled><option>No rotation</option></select></span>
            <label for="rtype">Rotation type</label><span class="sel short"><select id="rtype" disabled><option>Independent</option></select></span>
            <label for="flip">Flip</label><span class="sel short"><select id="flip" disabled><option>None</option></select></span>
            <label for="ftype">Flip type</label><span class="sel short"><select id="ftype" disabled><option>Independent</option></select></span>
            <span>Quantities</span><span class="qty"><label for="qs">S:</label><input id="qs" type="text" disabled><label for="qx">FX:</label><input id="qx" type="text" disabled><label for="qy">FY:</label><input id="qy" type="text" disabled><label for="qxy">FXY:</label><input id="qxy" type="text" disabled></span>
            <span>Piece set on</span><span class="radios"><label><input type="radio" name="seton" disabled>Seam line</label><label><input type="radio" name="seton" disabled>Cut line</label></span>
            <label for="zone">Piece quality zone</label><span class="sel short"><select id="zone" disabled><option>&lt;None&gt;</option></select></span>
            <label for="allow">Seam allowance qua...</label><span class="sel short"><select id="allow" disabled><option>&lt;None&gt;</option></select></span>
            <label for="lseam">Layer seam line</label><span class="sel"><select id="lseam" disabled><option></option></select></span>
            <label for="lcut">Layer cut line</label><span class="sel"><select id="lcut" disabled><option></option></select></span>
            <input class="full" type="text" aria-label="Piece description" placeholder="Add piece description" disabled>
          </div>
          <button class="table-btn">Piece properties table</button>
        </fieldset>
        <button class="hints"><span>HINTS AREA</span><i></i></button>
      </div>
    </aside>
  </div>
  <footer class="status"><span></span><span></span><span></span></footer>
</div>
<script src="pieces.js"></script>
</body>
</html>
```

FILE: styles.css
```css
* { box-sizing: border-box; }
body { margin: 0; background: #f4f4f4; color: #333; font: 6px/8px "Open Sans", "Noto Sans", sans-serif; }
button { margin: 0; padding: 0; border: 0; background: none; font: inherit; color: inherit; }
a { color: inherit; text-decoration: none; }
svg { display: block; }
.sprite { position: absolute; width: 0; height: 0; }

/* icon paints */
.y { fill: #f8d60a; stroke: #645812; stroke-width: .7; }
.b { fill: #c9e6f6; stroke: #55636e; stroke-width: .7; }
.bd { fill: #1b6ea8; stroke: #135382; stroke-width: .5; }
.g { fill: #3c9136; }
.gr { fill: #d9f0d2; stroke: #4a9c3c; stroke-width: .9; }
.gr2 { fill: #e3e7ea; stroke: #5c656c; stroke-width: .7; }
.w { fill: #fff; stroke: #555; stroke-width: .7; }
.wl { fill: none; stroke: #fff; stroke-width: .9; }
.k { fill: none; stroke: #444; stroke-width: .7; }
.k2 { fill: none; stroke: #333; stroke-width: 1.1; }
.bl { fill: none; stroke: #3a9bd0; stroke-width: 1; }
.ol { fill: none; stroke: #f0762b; stroke-width: 1; }
.rl { fill: none; stroke: #e0484e; stroke-width: 1; }
.rr { fill: #fff; stroke: #e22; stroke-width: 1.1; }
.q { fill: none; stroke: #a5a5a5; stroke-width: .7; }
.dash { fill: none; stroke: #555; stroke-width: .8; stroke-dasharray: 1.5 1; }

.app { display: flex; flex-direction: column; height: 100vh; }

.titlebar { display: flex; align-items: center; height: 15px; padding: 0 1px 0 3px; background: #fff; border-bottom: 1px solid #8b898c; }
.logo { width: 11px; height: 11px; }
.menu { display: flex; gap: 11px; margin-left: 6px; font-family: Roboto, sans-serif; font-weight: 700; }
.titlebar h1 { flex: 1; margin: 0 0 0 79px; font-size: 7px; line-height: 9px; font-weight: 700; }
.user { display: flex; align-items: center; gap: 3px; margin-right: 5px; }
.user svg { width: 7px; height: 7px; }
.win { display: flex; }
.win button { width: 18px; height: 14px; display: grid; place-items: center; }
.win svg { width: 8px; height: 8px; fill: none; stroke: #111; stroke-width: 1.1; }

.work { flex: 1; min-height: 0; display: grid; grid-template-columns: minmax(0, 1fr) 210px; }
.left { display: flex; flex-direction: column; min-width: 0; border-right: 1px solid #d6d6d6; }

.toolbar { display: flex; height: 17px; background: linear-gradient(#f9f9f9, #ededed); border-bottom: 1px solid #d0d0d0; }
.toolbar + .toolbar { height: 18px; }
.group { display: flex; align-items: stretch; padding-right: 1px; }
.group + .group { padding-left: 2px; border-left: 1px solid #d2d2d2; }
.group.mid { padding-right: 2px; }
.group.roomy { padding-right: 5px; }
.group button { display: flex; align-items: center; justify-content: center; width: 17px; }
.group svg { width: 12px; height: 12px; flex: none; }
.group button.drop { width: 22px; justify-content: flex-start; padding-left: 2px; gap: 3px; }
.drop::after { content: ""; border: 2px solid transparent; border-top-color: #aaa; border-bottom: 0; }
.group .pair { width: 21px; }
.group .pair svg { width: 16px; }
.group .pressed { background: #bdbdbd; }

.stage { flex: 1; min-height: 0; display: grid; grid-template: minmax(0, 1fr) 6px / minmax(0, 1fr) 6px; border-left: 1px solid #d6d6d6; }
.canvas { position: relative; min-width: 0; min-height: 0; background: #fff; }
.drawing { width: 100%; height: 100%; }
.palette { position: absolute; left: 14px; top: 14px; width: 18px; border: 1px solid #d5d5d5; background: #f5f5f5; box-shadow: 1px 1px 3px rgba(0, 0, 0, .3); }
.palette button { display: grid; place-items: center; width: 100%; height: 18px; border-bottom: 1px solid #ccc; }
.palette button:last-child { border-bottom: 0; height: 17px; }
.palette .on { background: #b9b9bb; outline: 1px solid #777; outline-offset: -1px; }
.palette svg { width: 11px; height: 11px; }

.vbar { grid-row: 1 / 3; grid-column: 2; display: flex; flex-direction: column; align-items: center; padding: 2px 0 7px; background: #f5f5f5; }
.vtrack { flex: 1; width: 3px; padding-top: 165px; }
.vtrack b { display: block; width: 3px; height: 51%; border-radius: 2px; background: #a6a6a6; }
.hbar { display: flex; align-items: center; justify-content: space-between; padding: 0 2px; background: #f5f5f5; }
.hbar b { flex: 1; height: 3px; margin: 0 8px 0 7px; border-radius: 2px; background: #a6a6a6; }
.up, .down, .prev, .next { border: 2px solid transparent; }
.up { border-bottom: 3px solid #888; border-top: 0; }
.down { border-top: 3px solid #888; border-bottom: 0; }
.prev { border-right: 3px solid #888; border-left: 0; }
.next { border-left: 3px solid #888; border-right: 0; }

/* graded outlines */
.cloth { fill: #ffe496; }
.ln { fill: none; stroke-width: .9; }
.size-base { stroke: #3f3a2a; }
.size-in { stroke: #ff9a57; }
.size-1 { stroke: #62dede; }
.size-2 { stroke: #949494; }
.size-3 { stroke: #ee5f9b; }
.grain { fill: none; stroke: #332d1c; stroke-width: .8; }
.notches { fill: none; stroke: #222; stroke-width: 1.1; }
.notches .blob { stroke-width: 2; }
.plate path { fill: none; stroke: #2e2918; stroke-width: .8; }
.plate text { fill: #3d3620; font-family: "Liberation Mono", monospace; }
.t7 { font-size: 7px; }
.t6 { font-size: 6px; }
.t5 { font-size: 5px; }
.t4 { font-size: 4px; font-weight: 700; }

.side { display: flex; min-width: 0; font-family: "Liberation Sans", sans-serif; }
.grip { align-self: center; width: 4px; height: 13px; background: radial-gradient(circle at 2px 1px, #bbb 1px, transparent 1px) 0 0 / 4px 3px; }
.panels { flex: 1; min-width: 0; display: flex; flex-direction: column; }
.accordion { display: grid; grid-auto-rows: 1fr; height: 69px; margin-right: 6px; background: #3b3d4b; font: 5px/6px Roboto, sans-serif; color: #b5b6bd; }
.accordion button { display: flex; align-items: center; padding: 0 3px; border-bottom: 1px solid #474957; text-align: left; }
.accordion span { flex: 1; margin-left: 4px; }
.accordion .active { color: #f2f2f2; font-weight: 500; }
.accordion.single { height: 12px; margin-top: 5px; border-bottom: 1px solid #858594; }
.accordion.single button { border: 0; }
.lk { width: 8px; height: 6px; }
.ar { width: 6px; height: 6px; }

.guide { margin: 5px 11px 0 5px; height: 90px; table-layout: fixed; border: 1px solid #d8d8d8; border-collapse: separate; border-spacing: 0; background: #fff; font-size: 5px; line-height: 6px; }
.guide th { height: 13px; padding: 0 3px; border-bottom: 1px solid #ddd; text-align: left; font-weight: 400; color: #777; }
.guide td { padding: 0; color: #222; }
.guide .ic { width: 15px; padding-left: 2px; }
.guide .ic svg { width: 10px; height: 10px; }
.guide .v { width: 27px; }
.guide .v:last-child { width: 39px; }
.guide small { font-size: 5px; color: #888; }
.guide tbody tr:nth-child(odd) { background: #f4f4f4; }

.props { min-width: 0; margin: 3px 11px 0 5px; padding: 0 4px 4px; border: 1px solid #d9d9d9; border-radius: 2px; }
.props legend { padding: 0 3px 0 0; font-size: 6px; line-height: 8px; font-weight: 700; color: #333; }
.form { display: grid; grid-template-columns: 64px minmax(0, 1fr); column-gap: 6px; grid-template-rows: repeat(7, 13px) 12px 13px 12px 13px 12px repeat(5, 13px); align-items: center; margin-top: 2px; color: #bdbdbd; }
.form > label, .form > span:not([class]) { white-space: nowrap; }
.form input[type=text] { width: 100%; height: 10px; min-width: 0; padding: 0 2px; border: 1px solid #e2e2e2; background: #f6f6f6; font: 5px/8px "Liberation Sans", sans-serif; }
.form input::placeholder { color: #cfcfcf; font-size: 5px; }
.form .full { grid-column: 1 / 3; }
.form input[type=radio], .form input[type=checkbox] { appearance: none; width: 6px; height: 6px; margin: 0; border: 1px solid #dedede; }
.form input[type=radio] { border-radius: 50%; }
.radios { display: flex; gap: 5px; font: 5px/6px Roboto, sans-serif; }
.radios label { display: flex; align-items: center; gap: 2px; }
.na { font-size: 5px; }
.sel { position: relative; display: block; height: 10px; }
.sel.short { width: 50px; }
.sel select { display: block; appearance: none; width: 100%; height: 10px; padding: 0 2px; border: 1px solid #e2e2e2; border-radius: 0; background: linear-gradient(90deg, #f6f6f6, #f6f6f6) 0 0 / calc(100% - 8px) 100% no-repeat #e9e9e9; color: #b4b4b4; font: 5px/8px Roboto, sans-serif; opacity: 1; }
.sel::after { content: ""; position: absolute; right: 2px; top: 4px; border: 2px solid transparent; border-top-color: #ccc; border-bottom: 0; }
.qty { display: grid; grid-template-columns: 7px 17px 12px 16px 12px 16px 14px 1fr; font-size: 5px; }
.qty label { padding-left: 2px; line-height: 10px; background: #efefef; }
.table-btn { display: block; margin-top: 4px; height: 13px; padding: 0 5px; border: 1px solid #cfcfcf; border-radius: 1px; background: #ebebeb; font-weight: 700; color: #222; }

.hints { display: flex; align-items: center; justify-content: space-between; height: 17px; margin-top: 10px; padding: 0 4px; border-top: 1px solid #d9d9d9; background: #ededed; font: 5px/6px Roboto, sans-serif; color: #777; }
.hints i { width: 4px; height: 1px; background: #444; }

.status { display: grid; grid-template-columns: 379px 380px 1fr; height: 13px; border-top: 1px solid #d9d9d9; padding: 1px 0; background: #f4f4f4; }
.status span + span { border-left: 1px solid #ddd; }
```

FILE: pieces.js
```js
const front = [
  "M237.5 66 L254 65 C252 80 251 92 254 102 C258 121 274 133 291 133 C308 133 324 121 328 102 C331 92 330 80 328 65 L344.5 66 C345 95 350 125 356 148 L356.5 150 C351 180 343.500 215 343.500 250 L343.5 300 L347.5 385 C319 397 304 420 297 479 L285 479 C278 420 263 397 234.5 385 L238.5 300 L238.5 250 C238.5 215 231 180 225.5 150 L226 148 C232 125 237 95 237.5 66 Z",
  "M238 58 L255 56 C251 74 250 92 254 102 C258 121 274 133 291 133 C308 133 324 121 328 102 C332 92 331 74 327 56 L344 58 C348 90 355 120 363.5 140 L362.5 148 C357 185 349 220 349 260 L350 300 L354.7 393 C325 405 305 430 297.5 487.5 L284.5 487.5 C277 430 257 405 227.3 393 L232 300 L233 260 C233 220 225 185 219.5 148 L218.5 140 C227 120 234 90 238 58 Z"
];
const back = [
  "M541 122 L560 115 C572 124 624 124 636 115 L655 122 C621 164 621 220 655 263 Q656 290 654 313 L672 417 C651 448 628 480 604 499.5 L592 499.5 C568 480 545 448 524 417 L542 313 Q540 290 541 263 C575 220 575 164 541 122 Z",
  "M533 117.5 L560 106 C572 115.5 624 115.5 636 106 L663 117.5 C630 158 630 215 663 255 Q664 283 662 310 L681 425 C660 455 632 490 604 508.5 L592 508.5 C564 490 536 455 515 425 L534 310 Q532 283 533 255 C566 215 566 158 533 117.5 Z"
];
const frontSide = [
  "M179 179 C203 192 218 208 218 228 C218 250 204 275 204 300 C206 330 206 360 205.5 387 Q180 378 151 379.5 Q163 330 160.5 303 Q160 285 150.5 233 C168 228 182 208 179 179 Z",
  "M178 169 C205 185 221 205 221 226 C221 248 204 275 204 300 C206 330 206 360 205.5 395 Q180 386 143.5 387 Q156 335 154 301 Q153 280 145 224 C165 220 182 200 178 169 Z"
];
const backLeft = [
  "M113.5 235.5 L76 255 Q83 277 83 302 Q76 350 71.5 406 Q85 390 115.5 383 Q118 340 117 303 Q116 265 113.5 235.5 Z",
  "M115 227 L69 245 Q76 280 75.5 301 Q66 350 61.5 414.5 Q80 399 113.5 392 Q118 340 117 303 Q116 265 115 227 Z"
];
const backRight = [
  "M459.5 238 L497.5 257 Q489 280 490 305 Q497 350 500 409 Q486 393 456 385 Q454 340 456 305 Q458 265 459.5 238 Z",
  "M459.5 228 L506 248.5 Q497 280 498 304 Q507 355 508.7 417.5 Q490 400 456 393 Q454 340 456 305 Q458 265 459.5 228 Z"
];

// Drawn in this order, so the base outline lies over edges that all sizes share.
const layers = [
  ["cloth", 0],
  ["ln size-3", 1],
  ["ln size-2", 2 / 3],
  ["ln size-1", 1 / 3],
  ["ln size-in", -1 / 3],
  ["ln size-base", 0]
];

function grade([base, largest], t) {
  const end = largest.match(/-?[\d.]+/g).map(Number);
  let i = 0;
  return base.replace(/-?[\d.]+/g, n => (Number(n) + (end[i++] - n) * t).toFixed(2));
}

function draw(piece, transform) {
  const group = document.createElementNS("http://www.w3.org/2000/svg", "g");
  if (transform) group.setAttribute("transform", transform);
  for (const [name, t] of layers) {
    const path = document.createElementNS("http://www.w3.org/2000/svg", "path");
    path.setAttribute("class", name);
    path.setAttribute("d", grade(piece, t));
    group.append(path);
  }
  document.getElementById("pieces").append(group);
}

draw(backLeft);
draw(frontSide);
draw(front);
draw(frontSide, "translate(582.7 -1.5) scale(-1 1)");
draw(backRight);
draw(back);
```
